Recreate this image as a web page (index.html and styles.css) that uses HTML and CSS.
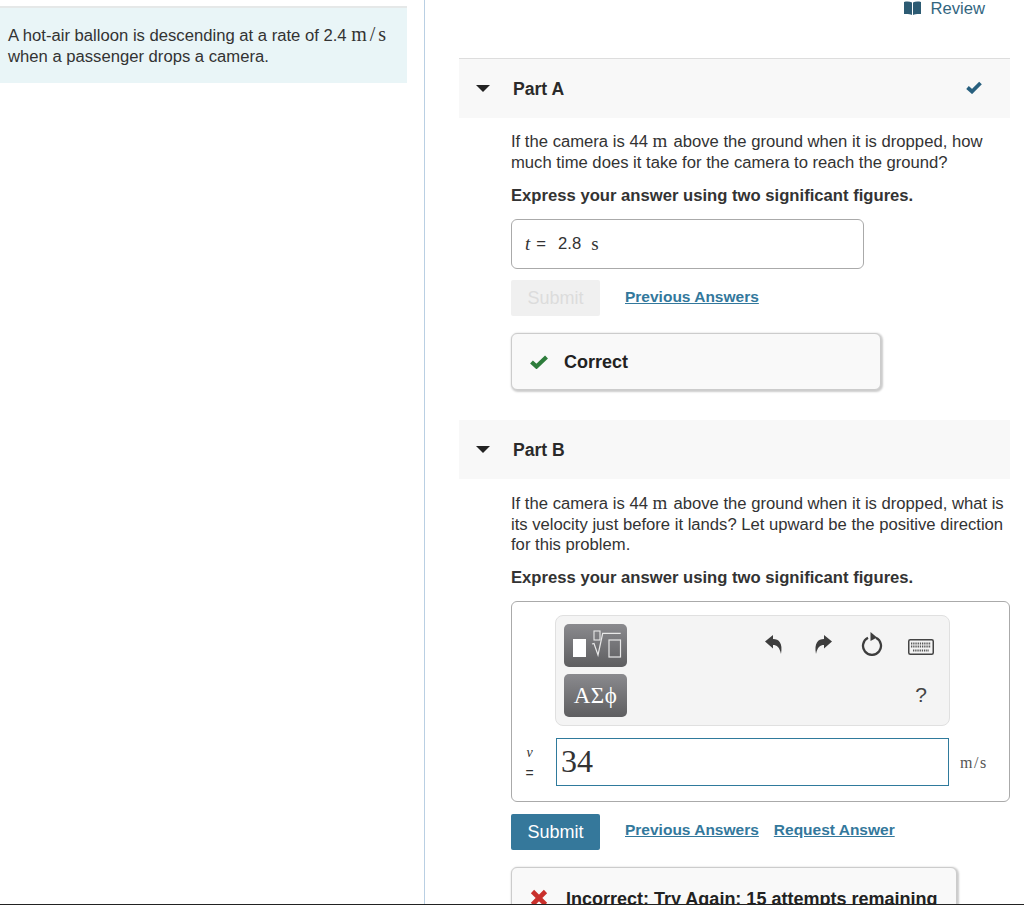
FILE: index.html
```html
<!DOCTYPE html>
<html lang="en">
<head>
<meta charset="utf-8">
<title>Hot-air balloon problem</title>
<link rel="stylesheet" href="styles.css">
</head>
<body>
<div class="page">
  <aside class="left">
    <div class="intro">A hot-air balloon is descending at a rate of 2.4 <span class="unit">m/s</span> when a passenger drops a camera.</div>
  </aside>
  <main class="right">
    <div class="review-row">
      <svg class="book" viewBox="0 0 17 14" width="17" height="14"><path d="M0 1C3 .2 6 .4 8 1.5V14C6 13 3 12.700 0 13ZM9 1.500C11 .4 14 .2 17 1V13C14 12.700 11 13 9 14Z" fill="#2d5b73"/></svg>
      <span class="review">Review</span>
    </div>
    <section class="part part-a">
      <header class="part-head">
        <span class="caret"></span>
        <span class="part-title">Part A</span>
        <svg class="head-check" viewBox="0 0 16 13" width="16" height="13"><path d="M1.500 6.500 L6 10.500 L14.500 2" fill="none" stroke="#28607f" stroke-width="3.800"/></svg>
      </header>
      <div class="part-body">
        <p class="question">If the camera is 44 <span class="unit">m</span> above the ground when it is dropped, how much time does it take for the camera to reach the ground?</p>
        <p class="instruction">Express your answer using two significant figures.</p>
        <div class="answer-box"><i class="var">t</i><span class="eq">=</span><span class="val">2.8</span><span class="unit val-unit">s</span></div>
        <div class="actions">
          <button class="btn btn-disabled">Submit</button>
          <a class="link">Previous Answers</a>
        </div>
        <div class="feedback fb-correct">
          <svg class="fb-icon" viewBox="0 0 18 14" width="18" height="14"><path d="M1.500 7 L6.500 11.500 L16.500 2" fill="none" stroke="#2e7d3c" stroke-width="4.200"/></svg>
          <span class="fb-text">Correct</span>
        </div>
      </div>
    </section>
    <section class="part part-b">
      <header class="part-head">
        <span class="caret"></span>
        <span class="part-title">Part B</span>
      </header>
      <div class="part-body">
        <p class="question">If the camera is 44 <span class="unit">m</span> above the ground when it is dropped, what is its velocity just before it lands? Let upward be the positive direction for this problem.</p>
        <p class="instruction">Express your answer using two significant figures.</p>
        <div class="editor">
          <div class="toolbar">
            <div class="tool-btns">
              <div class="tool-btn">
                <svg viewBox="0 0 63 43" width="63" height="43"><rect x="9" y="15" width="13" height="18" fill="#fff"/><rect x="30" y="7" width="6" height="9" fill="none" stroke="#e8e8e8" stroke-width="1.100"/><path d="M28 20 L30 19.500 L34 31 L38.700 9.300 H56.700" fill="none" stroke="#e8e8e8" stroke-width="1.200"/><rect x="45" y="16" width="11.500" height="17" fill="none" stroke="#e8e8e8" stroke-width="1.200"/></svg>
              </div>
              <div class="tool-btn tool-greek">ΑΣϕ</div>
            </div>
            <div class="tool-icons">
              <div class="icon-row">
                <svg class="icon-undo" viewBox="0 0 20 22" width="20" height="22"><path d="M1 7.500 L9 1 V5 C15 5 19 9 17 20 C15.500 13 13 11 9 11 V14.500 Z" fill="#3d3d3d"/></svg>
                <svg class="icon-undo" viewBox="0 0 20 22" width="20" height="22"><path d="M19 7.500 L11 1 V5 C5 5 1 9 3 20 C4.500 13 7 11 11 11 V14.500 Z" fill="#3d3d3d"/></svg>
                <svg class="icon-reset" viewBox="0 0 22 24" width="22" height="24"><path d="M7 5.800 A9 9 0 1 0 15 5.800" fill="none" stroke="#3d3d3d" stroke-width="2.300"/><path d="M9.500 0 L16 5.500 L9.500 9 Z" fill="#3d3d3d"/></svg>
                <svg class="icon-keys" viewBox="0 0 26 16" width="26" height="16"><rect x=".75" y=".75" width="24.500" height="14.500" rx="1.500" fill="none" stroke="#444" stroke-width="1.500"/><path d="M3 4.500 H23 M3 7.500 H23 M5 11.500 H21" stroke="#555" stroke-width="2" stroke-dasharray="1.300 .9"/></svg>
              </div>
              <div class="help">?</div>
            </div>
          </div>
          <div class="input-row">
            <div class="var-label"><i>v</i><span>=</span></div>
            <div class="math-input">34</div>
            <div class="unit-label">m/s</div>
          </div>
        </div>
        <div class="actions actions-b">
          <button class="btn btn-primary">Submit</button>
          <a class="link">Previous Answers</a>
          <a class="link">Request Answer</a>
        </div>
        <div class="feedback fb-wrong">
          <svg class="fb-icon" viewBox="0 0 18 18" width="18" height="18"><path d="M2.500 2.500 L15.500 15.500 M15.500 2.500 L2.500 15.500" stroke="#c9302c" stroke-width="4.600"/></svg>
          <span>Incorrect; Try Again; 15 attempts remaining</span>
        </div>
      </div>
    </section>
  </main>
</div>
<div class="bottom-line"></div>
</body>
</html>
```
FILE: styles.css
```css
* { box-sizing: border-box; }
html, body { margin: 0; padding: 0; height: 905px; overflow: hidden; background: #fff; }
body { font-family: "Liberation Sans", Arial, sans-serif; font-size: 16.650px; line-height: 21px; color: #333; display: flex; flex-direction: column; }
p { margin: 0; }
.page { flex: 0 0 904px; height: 904px; overflow: hidden; display: flex; align-items: flex-start; }
.bottom-line { flex: 0 0 1px; background: #222; }
.left { flex: 0 0 425px; height: 904px; border-right: 1px solid #b9cfe3; padding-top: 6px; }
.intro { width: 407px; height: 77px; background: #e9f5f7; border-top: 2px solid #e5e8e8; padding: 16px 8px 0; }
.unit { font-family: "Liberation Serif", serif; font-size: 19px; line-height: 1; letter-spacing: 1.500px; }
.intro .unit { font-size: 20px; letter-spacing: 3px; }
.right { flex: 0 0 585px; padding-left: 34px; }
.review-row { height: 58px; display: flex; align-items: flex-start; justify-content: flex-end; gap: 9px; padding-right: 25px; }
.book { margin-top: 1px; }
.review { font-size: 16.650px; line-height: 17px; color: #33667f; }
.part-head { height: 59px; background: #f8f8f8; display: flex; align-items: center; padding: 0 28px 0 17px; }
.part-a .part-head { height: 60px; border-top: 1px solid #ddd; }
.head-check { margin-top: -2px; }
.caret { width: 0; height: 0; border-left: 7px solid transparent; border-right: 7px solid transparent; border-top: 7px solid #222; margin-top: -1px; }
.part-title { font-weight: bold; font-size: 17.600px; color: #2a2a2a; margin-left: 23px; flex: 1; padding-top: 2px; }
.part-body { padding: 0 0 0 52px; }
.question { padding-top: 13px; line-height: 20.600px; }
.part-b .question { padding-top: 14px; }
.instruction { font-weight: bold; margin-top: 12px; }
.answer-box { width: 353px; height: 50px; margin-top: 13px; border: 1px solid #aaa; border-radius: 6px; display: flex; align-items: center; padding: 0 13px 2px; }
.var { font-family: "Liberation Serif", serif; font-size: 19px; }
.eq { margin-left: 6px; }
.val { margin-left: 12px; }
.val-unit { margin-left: 10px; }
.actions { display: flex; align-items: flex-start; margin-top: 11px; height: 37px; }
.btn { width: 89px; height: 36px; border: none; border-radius: 2px; font: 18px "Liberation Sans", Arial, sans-serif; padding: 1px 0 0; }
.btn-disabled { background: #f0f0f0; color: #dcdcdc; }
.btn-primary { background: #35789b; color: #fff; }
.link { font-weight: bold; font-size: 15.500px; line-height: 18px; color: #33789c; text-decoration: underline; margin-left: 25px; margin-top: 8px; }
.link + .link { margin-left: 15px; }
.actions-b .link { margin-top: 7px; }
.feedback { display: flex; align-items: center; font-weight: bold; font-size: 18px; color: #222; background: #f9f9f9; border: 1px solid #ccc; border-radius: 6px; box-shadow: 1px 1px 2px 1px #ccc; }
.fb-correct { width: 370px; height: 57px; margin-top: 16px; padding-left: 18px; gap: 16px; }
.fb-text { padding-top: 2px; }
.part-b { margin-top: 30px; }
.part-b .instruction { margin-top: 11px; }
.editor { width: 499px; height: 201px; margin-top: 13px; border: 1px solid #aaa; border-radius: 6px; padding: 13px 0 0 43px; }
.toolbar { width: 395px; height: 111px; background: #f4f4f4; border: 1px solid #e0e0e0; border-radius: 8px; padding: 8px 4px 8px 8px; display: flex; justify-content: space-between; }
.tool-btns { display: flex; flex-direction: column; gap: 7px; }
.tool-btn { width: 63px; height: 43px; border-radius: 5px; background: linear-gradient(#8a8a8e, #5e5e60); }
.tool-greek { display: flex; align-items: center; justify-content: center; color: #fff; font-family: "Liberation Serif", serif; font-size: 23px; letter-spacing: .4px; }
.tool-icons { width: 196px; }
.icon-row { display: grid; grid-template-columns: repeat(4, 49px); justify-items: center; align-items: center; height: 45px; }
.icon-undo { margin-top: -2px; }
.icon-reset { margin-top: -4px; }
.icon-keys { margin-top: 2px; }
.help { text-align: right; font-size: 21px; color: #444; margin-top: 15px; padding-right: 18px; }
.input-row { display: flex; align-items: flex-start; margin-top: 12px; margin-left: -43px; }
.var-label { width: 44px; padding: 4px 9px 0 0; display: flex; flex-direction: column; align-items: center; font-size: 14px; line-height: 21px; }
.var-label i { font-family: "Liberation Serif", serif; }
.math-input { width: 393px; height: 48px; border: 1px solid #2f7a9c; font-family: "Liberation Serif", serif; font-size: 32px; line-height: 45px; padding-left: 4px; }
.unit-label { font-family: "Liberation Serif", serif; font-size: 16px; letter-spacing: 1.500px; margin-left: 11px; margin-top: 14px; color: #555; }
.actions-b { margin-top: 12px; }
.fb-wrong { width: 446px; height: 60px; margin-top: 16px; padding: 21px 0 0 18px; gap: 18px; align-items: flex-start; }
```
